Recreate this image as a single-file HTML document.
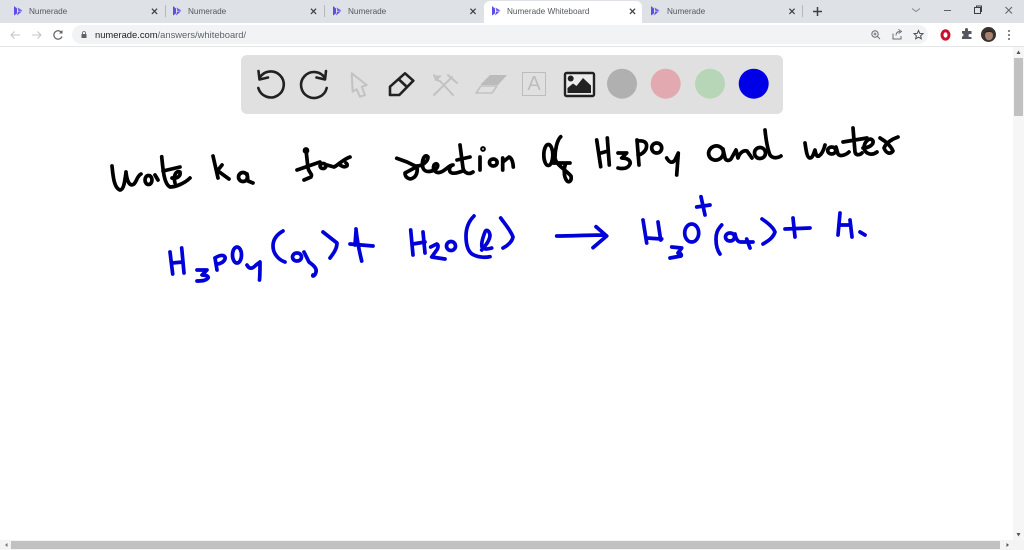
<!DOCTYPE html>
<html><head><meta charset="utf-8"><title>Numerade Whiteboard</title>
<style>
html,body{margin:0;padding:0;width:1024px;height:550px;overflow:hidden;background:#fff}
body{position:relative;font-family:"Liberation Sans",sans-serif}
#w{position:absolute;left:0;top:0;width:1024px;height:550px;filter:blur(.3px)}
.a{position:absolute}
.t{position:absolute;top:7px;font-size:8.2px;line-height:10px;color:#55585c;white-space:nowrap}
svg{position:absolute;left:0;top:0}
</style></head><body><div id="w">
<div class="a" style="left:0;top:0;width:1024px;height:23px;background:#dee1e6"></div>
<div class="a" style="left:484px;top:1px;width:158px;height:22px;background:#fff;border-radius:6px 6px 0 0"></div>
<div class="a" style="left:0;top:23px;width:1024px;height:23px;background:#fff"></div>
<div class="a" style="left:72px;top:25px;width:856px;height:19px;background:#f1f3f4;border-radius:10px"></div>
<div class="a" style="left:0;top:46px;width:1024px;height:1px;background:#e4e5e7"></div>
<div class="t" style="left:29px">Numerade</div>
<div class="t" style="left:188px">Numerade</div>
<div class="t" style="left:348px">Numerade</div>
<div class="t" style="left:507px">Numerade Whiteboard</div>
<div class="t" style="left:667px">Numerade</div>
<div class="a" style="left:95px;top:29px;font-size:9.4px;line-height:11px;color:#5f6368;white-space:nowrap"><span style="color:#202124">numerade.com</span>/answers/whiteboard/</div>

<div class="a" style="left:241px;top:55px;width:542px;height:59px;background:#e0e0e0;border-radius:6px"></div>
<div class="a" style="left:522px;top:72px;width:24px;height:24px;box-sizing:border-box;border:1.5px solid #bdbdbd;color:#bdbdbd;font-size:20px;line-height:22px;text-align:center">A</div>

<svg width="1024" height="550" viewBox="0 0 1024 550" fill="none">
<defs>
<g id="fav"><path d="M0 0V9.5L3 7.5V2.5Z" fill="#5b50e6"/><path d="M3.5 1.5L8.5 4.5L4.5 5.5Z" fill="#6f63ee"/><path d="M4 6L8 5.2L3 9.5Z" fill="#5b50e6"/></g>
<g id="x"><path d="M-2.6-2.6L2.6 2.6M2.6-2.6L-2.6 2.6" stroke="#3c4043" stroke-width="1.2"/></g></defs>

<use href="#fav" x="14" y="6"/><use href="#fav" x="173" y="6"/><use href="#fav" x="333" y="6"/><use href="#fav" x="492" y="6"/><use href="#fav" x="651" y="6"/>
<use href="#x" x="154.500" y="11.300"/><use href="#x" x="313.500" y="11.300"/><use href="#x" x="473" y="11.300"/><use href="#x" x="632.500" y="11.300"/><use href="#x" x="792" y="11.300"/>
<path d="M165.500 5V17M324.500 5V17M802.500 5V17" stroke="#b4b7bb" stroke-width="1"/>
<path d="M813 11.500H822M817.500 7V16" stroke="#3c4043" stroke-width="1.500"/>
<path d="M912 8.500L916 11.500L920 8.500" stroke="#85888c" stroke-width="1"/>
<path d="M944 10.500H951" stroke="#5f6368" stroke-width="1"/>
<rect x="974.500" y="7.500" width="6" height="6" stroke="#3c4043" stroke-width="1"/><path d="M976.500 7.500V6H981.500V11.500H980.500" stroke="#3c4043" stroke-width="1"/>
<path d="M1005.500 7L1012 13.500M1012 7L1005.500 13.500" stroke="#5f6368" stroke-width="1"/>

<path d="M20 35H11M14.500 31.500L11 35L14.500 38.500" stroke="#c4c6c9" stroke-width="1.100"/>
<path d="M32 35H41M37.500 31.500L41 35L37.500 38.500" stroke="#c4c6c9" stroke-width="1.100"/>
<path d="M61.500 32.500A4.200 4.200 0 1 0 62 36.500" stroke="#5f6368" stroke-width="1.200"/><path d="M62.500 30V33.500H59Z" fill="#5f6368"/>
<rect x="81.500" y="34" width="5" height="4" fill="#5f6368"/><path d="M82.500 34V33A1.500 1.500 0 0 1 85.500 33V34" stroke="#5f6368" stroke-width="0.800"/>
<circle cx="875" cy="34" r="3.200" stroke="#6a6d71" stroke-width="1"/><path d="M877.500 36.500L880 39M873.500 34H876.500M875 32.500V35.500" stroke="#6a6d71" stroke-width="0.900"/>
<path d="M893 33.500V39H901V36M896 35.500C896 32.500 898 31.500 900 31.500M898.500 29.500L901.500 31.500L898.500 33.500" stroke="#6a6d71" stroke-width="1"/>
<path d="M918.500 30.500L919.800 33.400L923 33.700L920.600 35.800L921.300 38.800L918.500 37.200L915.700 38.800L916.400 35.800L914 33.700L917.200 33.400Z" stroke="#4a4d52" stroke-width="1"/>
<ellipse cx="945.500" cy="35" rx="3.500" ry="4.200" stroke="#cc0f2f" stroke-width="3"/>
<path d="M962 32H965V30.500A1.400 1.400 0 0 1 968 30.500V32H971.500V35H970A1.500 1.500 0 0 0 970 38H971.500V40H962V37.500A1.500 1.500 0 0 0 962 34.500Z" fill="#55585c" transform="translate(0 -1)"/>
<circle cx="988.500" cy="34.500" r="7.500" fill="#3a322e"/><ellipse cx="989" cy="35.500" rx="4" ry="4.800" fill="#a98170"/><path d="M984.500 33C985.500 29.500 992 29.500 993 33C990 31.500 987 32 984.500 33Z" fill="#2a2422"/>
<circle cx="1009" cy="31" r="1" fill="#5f6368"/><circle cx="1009" cy="35" r="1" fill="#5f6368"/><circle cx="1009" cy="39" r="1" fill="#5f6368"/>

<g stroke="#222" stroke-width="2.600" stroke-linecap="round" stroke-linejoin="round">
<path d="M259.500 78A13 13 0 1 1 258.300 88"/><path d="M258.500 71L259.500 79.500L268 77.500"/>
<path d="M325 78A13 13 0 1 0 326.700 88"/><path d="M326 71L325 79.500L316.500 77.500"/>
<path d="M390 95V86.700L405 73.300L413.300 80.700L399.300 95ZM399 79.500L407 87"/>
</g>
<g stroke="#c2c2c2" stroke-width="2" stroke-linejoin="round" stroke-linecap="round">
<path d="M351.700 73.300L366.700 85L361.700 86.700L365 95L360 96.700L356.700 89.300L352.700 91.700Z"/>
<path d="M437 76C435 79 438 81 440 81L453 95M434 95L439 90L452 77M448 75L457 83M434 75L436 80L440 76"/>
</g>
<path d="M476 93L481 86H497L492 93Z" stroke="#c2c2c2" stroke-width="1.600" stroke-linejoin="round"/>
<path d="M481 84L490 75H507L498 85H481Z" fill="#bbb"/>
<rect x="565" y="73" width="29" height="23" rx="1.500" stroke="#222" stroke-width="2.400" fill="#ececec"/>
<circle cx="570.700" cy="78.500" r="3" fill="#222"/>
<path d="M567.500 93V88L573 83.500L576.500 86L583 78L591 85.500V93Z" fill="#222"/>
<circle cx="622" cy="83.700" r="15" fill="#b0b0b0"/>
<circle cx="665.700" cy="83.700" r="15" fill="#e3a9b1"/>
<circle cx="710" cy="83.700" r="15" fill="#b7d6b7"/>
<circle cx="753.700" cy="83.700" r="15" fill="#0000e6"/>

<g stroke-linecap="round" stroke-linejoin="round">
<g stroke="#000" stroke-width="3.700">
<path d="M112 166C113 176 114 188 120 190C124 190 125 180 126 172C127 182 130 187 134 184C137 181 137 176 141 174"/>
<ellipse cx="148.500" cy="180" rx="3.500" ry="4.500"/>
<path d="M155 175L158 180M161.700 156.700C163 170 164 184 170 187C176 187 185 183 190 178M163 171L180 167M172 178C177 179 181 176 180 172C176 170 173 176 175 183"/>
<path d="M213 156L218 178M218 171L229 179M218 170L222 165"/>
<ellipse cx="243" cy="177" rx="4.500" ry="4.500"/><path d="M247 174L248 181L253 183"/>
<circle cx="306" cy="150.500" r="1.500"/>
<path d="M306 150L308 168C309 173 313 174 311 177L304 180M297 170L320 162"/>
<ellipse cx="323" cy="166" rx="3" ry="2.500"/><path d="M327 165L334 167C337 166 342 160 350 157M340 165C346 169 349 165 346 163"/>
<path d="M396.700 158.300L407 162L416.700 166.700L405 173C405 178 410 180 413 178C417 176 418 170 416.700 166C423 166 428 161 428 157C425 153 421 160 423 168C425 173 431 172 436 169C440 165 436 162 434 165C432 170 436 174 441 172C446 170 449 165 453 165C449 166 448 172 452 173C456 174 459 172 463 171"/>
<path d="M460 145L463 168C464 173 469 175 473 172M457 160L470 157M480 157L480 170"/>
<circle cx="483" cy="149" r="1"/>
<ellipse cx="493.300" cy="162.500" rx="3.800" ry="3.500"/>
<path d="M502.700 158V170M503 162L509 157C512 158 513 163 513.300 167"/>
<ellipse cx="548.300" cy="155" rx="4.500" ry="10.500"/>
<path d="M560.700 136.700C557 140 555 150 555 158C556 165 566 170 571 176C572 181 569 183 567 181C563 176 564 167 566 163M553 163H570"/>
<path d="M596.700 140L600.700 166.700M607.300 138L609.300 165M601 153L608 151"/>
<path d="M618 153H626.700L621.700 158C628 158 631 161 630 164C628 169 622 169 618 168"/>
<path d="M637 140L639 165M637 141C645 140 648 143 646 149C644 153 640 155 638 155"/>
<ellipse cx="656.700" cy="148" rx="5" ry="5"/>
<path d="M666.700 158C669 162 672 164 675 160L678.300 153L676.700 175"/>
<ellipse cx="716" cy="153" rx="7.500" ry="7" transform="rotate(-25 716 153)"/>
<path d="M723 149L725 158C726 161 729 161 731 159L736 150L738 158C740 152 744 150 747 151L752 158"/>
<ellipse cx="760" cy="153" rx="5.500" ry="5.500"/><path d="M765 130C766 140 768 150 770 155C773 159 778 158 781 156"/>
<path d="M805 143C806 150 807 158 810 158C813 158 814 152 815 150C816 155 817 157 819 156C822 154 824 149 825 145"/>
<ellipse cx="831.700" cy="150.500" rx="4" ry="3.500"/><path d="M836 147L838 154C840 157 846 155 849 152"/>
<path d="M853 128L855 152C856 156 860 155 862 153M843 142L867 138"/>
<path d="M863 148C868 148 874 145 873 141C870 136 864 142 864 148C865 154 872 156 877 152"/>
<path d="M880 138C885 141 891 146 893 151C890 155 886 153 884 148C886 143 892 139 898 137"/>
</g>
<g stroke="#0000d8" stroke-width="3.700">
<path d="M170 252L172.700 274M181.700 248L184 273M172 263L183 262"/>
<path d="M197 270H207L202 275C207 275 209 277 208 278C206 281 201 281 197 281"/>
<path d="M215 258L217 270M215 258C221 254 226 255 225 259C224 262 220 264 217 264"/>
<ellipse cx="237" cy="255" rx="4.500" ry="8"/>
<path d="M247 265C249 269 252 269 255 266C257 264 259 263 260 262C260 268 260 275 259.500 280"/>
<path d="M283 231C276 235 273 240 273 246C273 254 279 260 285 262"/>
<ellipse cx="297" cy="257" rx="4.500" ry="4"/>
<path d="M304 252L309 262C313 265 317 268 316 272C315 276 312 277 313 275"/>
<path d="M323 232L337 243C337 249 333 254 330 258"/>
<path d="M356 229C357 240 359 250 361.700 261M350 244L373 246M356 231L355 245"/>
<path d="M410.700 230L413 255M423 232L425 253M413 244L425 242"/>
<path d="M430.700 247L436.700 244C439 245 438 249 436 251L431.700 257L445 259"/>
<circle cx="451" cy="246" r="4.500"/>
<path d="M474 216C468 222 466 229 466 236C466 245 468 251 472 254C477 257 484 258 490 256.700"/>
<path d="M481.700 250C486 245 490 240 490 235C489 230 486 229 485 232C483 237 481 243 482 247C484 250 488 249 491.700 248"/>
<path d="M500.700 218C505 224 511 231 513 237C512 242 507 246 503 248"/>
<path d="M556.700 236C572 236 588 235 603 235M596 226.700L606.700 236L593 247.700"/>
<path d="M643 220L646.700 243M658 222L660.700 240M646.700 238L661.700 239"/>
<path d="M671.700 247L681.700 248L678 253C681 253 682 255 681 256L670 258"/>
<ellipse cx="691.700" cy="233" rx="7" ry="9"/>
<path d="M701 196.700L705 215M696.700 207L710 205"/>
<path d="M721.700 225C717 230 716 234 716 239C716 245 717 250 720 254"/>
<ellipse cx="730" cy="237" rx="4.500" ry="4"/>
<path d="M735 234C736 240 738 242 741 242L753 242M746.700 239L750 248"/>
<path d="M762 219C768 223 773 227 775 232C773 238 768 241 763 244"/>
<path d="M785 229L810 228M793 218L795 237"/>
<path d="M840 213L838 235M850 220L852 237M840 225L850 225M860 232L865 235"/>
</g>
</g>

<rect x="1013" y="47" width="11" height="493" fill="#f6f6f6"/>
<rect x="1014" y="58" width="9" height="58" fill="#c1c1c1"/>
<path d="M1018.500 50.500L1016.500 54H1020.500Z" fill="#555"/>
<path d="M1018.500 536.500L1016.500 533H1020.500Z" fill="#555"/>
<rect x="0" y="540" width="1024" height="10" fill="#f4f4f4"/>
<rect x="11" y="541" width="989" height="8" fill="#c1c1c1"/>
<path d="M5 545L7.500 543V547Z" fill="#777"/><path d="M1009 545L1006.500 543V547Z" fill="#555"/>
</svg>
</div></body></html>
